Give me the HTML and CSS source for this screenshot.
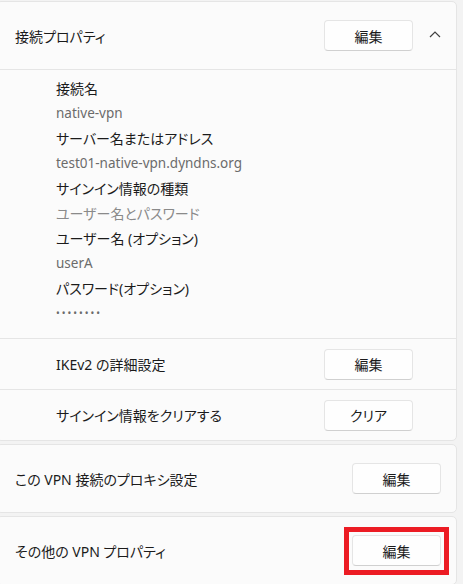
FILE: index.html
```html
<!DOCTYPE html>
<html lang="ja">
<head>
    <meta charset="UTF-8">
    <meta name="viewport" content="width=device-width, initial-scale=1.0">
    <title>VPN プロパティ</title>
    <link rel="stylesheet" href="styles.css">
</head>
<body>
    <div class="page">
        <!-- 接続プロパティ (展開されている状態) -->
        <div class="card">
            <div class="card-head">
                <span class="title">接続プロパティ</span>
                <button class="btn">編集</button>
                <span class="chevron">
                    <svg width="12" height="7" viewBox="0 0 12 7">
                        <polyline points="1,6 6,1 11,6" fill="none" stroke="#404040" stroke-width="1.2"/>
                    </svg>
                </span>
            </div>
            <div class="details">
                <p class="label">接続名</p>
                <p class="value">native-vpn</p>
                <p class="label">サーバー名またはアドレス</p>
                <p class="value">test01-native-vpn.dyndns.org</p>
                <p class="label">サインイン情報の種類</p>
                <p class="value light">ユーザー名とパスワード</p>
                <p class="label">ユーザー名 (オプション)</p>
                <p class="value">userA</p>
                <p class="label">パスワード(オプション)</p>
                <p class="value dots">••••••••</p>
            </div>
            <div class="sub-row">
                <span>IKEv2 の詳細設定</span>
                <button class="btn">編集</button>
            </div>
            <div class="sub-row">
                <span>サインイン情報をクリアする</span>
                <button class="btn">クリア</button>
            </div>
        </div>

        <div class="card row">
            <span class="title">この VPN 接続のプロキシ設定</span>
            <button class="btn">編集</button>
        </div>

        <div class="card row">
            <span class="title">その他の VPN プロパティ</span>
            <!-- 赤枠で強調 -->
            <span class="mark"><button class="btn">編集</button></span>
        </div>
    </div>
</body>
</html>
```

FILE: styles.css
```css
body{
    margin: 0;
    background: #f3f3f3;
    font-family: "Segoe UI", "Noto Sans", "Noto Sans CJK JP", sans-serif;
    font-size: 14px;
    font-feature-settings: "palt";
    color: #1b1b1b;
    overflow: hidden;
}

*{
    box-sizing: border-box;
}

.page{
    padding-top: 1px;
    margin-left: -4px;
    margin-right: 6px;
    display: flex;
    flex-direction: column;
    gap: 3px;
}

.card{
    background: #fbfbfb;
    border: 1px solid #e5e5e5;
    border-radius: 5px;
}

.card-head{
    display: flex;
    align-items: center;
    height: 68px;
    padding-left: 18px;
    border-bottom: 1px solid #e5e5e5;
}

.title{
    flex: 1;
}

.chevron{
    width: 43px;
    display: flex;
    justify-content: center;
    padding-bottom: 2px;
}

.btn{
    width: 89px;
    height: 31px;
    background: #fefefe;
    border: 1px solid #e5e5e5;
    border-bottom-color: #d0d0d0;
    border-radius: 4px;
    font-family: inherit;
    font-size: 14px;
    font-feature-settings: "palt";
    color: #1b1b1b;
    padding: 0;
}

.details{
    padding: 6px 0 12px 59px;
    border-bottom: 1px solid #e5e5e5;
}

.details p{
    margin: 0;
    line-height: 25px;
}

.details .value{
    color: #6b6b6b;
    font-size: 13.5px;
}

.details .light{
    color: #8a8a8a;
    font-size: 14px;
}

.details .dots{
    font-size: 10px;
    letter-spacing: 2px;
}

.sub-row{
    display: flex;
    justify-content: space-between;
    align-items: center;
    height: 51px;
    padding: 0 43px 0 59px;
    border-bottom: 1px solid #e5e5e5;
}

.sub-row:last-child{
    border-bottom: none;
    height: 50px;
}

.row{
    display: flex;
    align-items: center;
    height: 69px;
    padding: 0 15px 0 18px;
}

/* 赤い四角の枠 - レイアウトには影響させない */
.mark{
    display: flex;
    border: 5px solid #ec1c24;
    padding: 3px 3px 4px 3px;
    margin: -8px -8px -9px -8px;
}
```
